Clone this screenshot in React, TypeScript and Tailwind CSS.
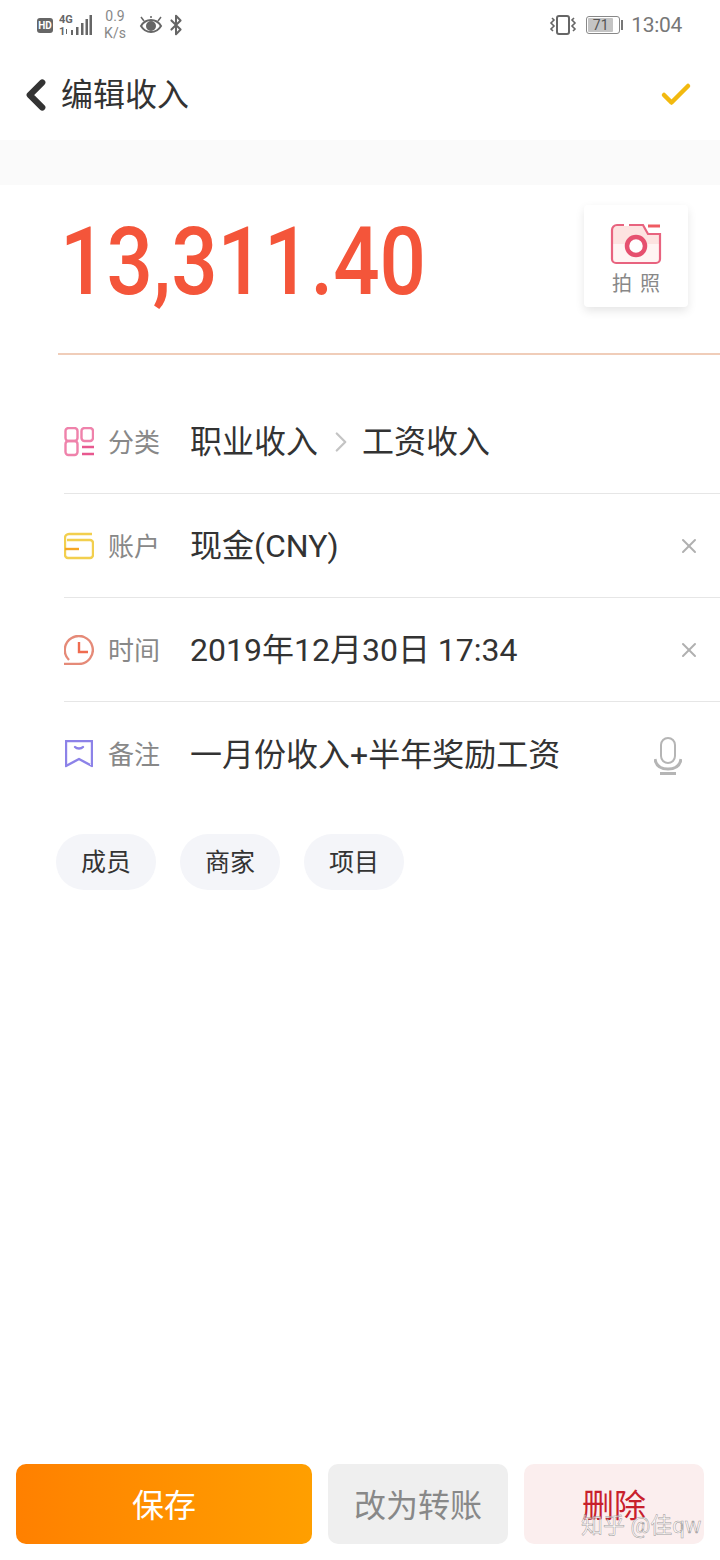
import React from 'react';
import { ChevronLeft, ChevronRight, X, Check, Bluetooth } from 'lucide-react';

const CJK = "font-['Roboto','Noto_Sans_CJK_SC',sans-serif]";

const StatusBar = () => (
  <div className="h-[50px] flex items-center justify-between pl-[37px] pr-[38px] text-[#6b6b6b]">
    <div className="flex items-center">
      <div className="w-[16px] h-[15px] rounded-[3px] bg-[#666] text-white text-[10px] font-bold leading-[15px] text-center">HD</div>
      <div className="ml-[6px] w-[35px] h-[24px]">
        <svg width="35" height="24" viewBox="0 0 35 24">
          <text x="0" y="10" fontSize="11" fontWeight="700" fill="#666" fontFamily="Roboto">4G</text>
          <text x="0" y="22" fontSize="11" fontWeight="700" fill="#666" fontFamily="Roboto">1</text>
          <path d="M7 16h1v5H7zM12 17h2V22h-2zM17 14h2.5V22H17zM22 10h2.5V22H22zM26.500 6h2.500V22h-2.500zM30.500 2h2.500V22h-2.500z" fill="#666" />
        </svg>
      </div>
      <div className="ml-[9px] w-[24px] text-[14px] leading-[17px] font-['Roboto',sans-serif] text-[#888] text-center">
        <div>0.9</div>
        <div>K/s</div>
      </div>
      <svg className="ml-[12px]" width="24" height="20" viewBox="0 0 24 20" fill="none" stroke="#666" strokeWidth="2">
        <path d="M2 11c3-5 6-6 10-6s7 1 10 6c-3 5-6 6-10 6s-7-1-10-6z" />
        <circle cx="12" cy="11" r="4" fill="#666" />
        <path d="M2 2l3 4M22 2l-3 4M12 1v2" strokeWidth="1.5" />
      </svg>
      <Bluetooth className="ml-[2px] text-[#666]" size={22} strokeWidth={2.2} />
    </div>
    <div className="flex items-center">
      <svg width="28" height="22" viewBox="0 0 28 22" fill="none" stroke="#666" strokeWidth="2">
        <rect x="8" y="2" width="12" height="18" rx="2" />
        <path d="M3 4l2 2-3 3 3 3-3 3 2 2M25 4l-2 2 3 3-3 3 3 3-2 2" strokeWidth="1.6" />
      </svg>
      <div className="ml-[9px] w-[34px] h-[18px] rounded-[3px] border border-[#888] p-[1px]">
        <div className="w-[25px] h-[14px] bg-[#c4c4c4] rounded-[1px] text-[14px] leading-[14px] text-[#555] text-center font-['Roboto',sans-serif]">71</div>
      </div>
      <div className="ml-[1px] w-[2px] h-[10px] bg-[#777]" />
      <span className="ml-[8px] text-[21px] tracking-[-0.3px] leading-none text-[#777] font-['Roboto',sans-serif]">13:04</span>
    </div>
  </div>
);

const CategoryIcon = () => (
  <svg width="30" height="30" viewBox="0 0 30 30" fill="none" stroke="#ef82ab" strokeWidth="2.4">
    <rect x="1.500" y="1" width="12" height="13" rx="3" />
    <rect x="17.500" y="1" width="11.500" height="13" rx="3" />
    <rect x="1.500" y="14" width="12" height="14" rx="3" />
    <path d="M18 20h12M18 27h12" stroke="#e8588f" />
  </svg>
);

const AccountIcon = () => (
  <svg width="30" height="28" viewBox="0 0 30 28" fill="none" stroke="#f2cf4e" strokeWidth="2.4">
    <path d="M28 2H5a4 4 0 0 0-4 4v17a3 3 0 0 0 3 3h22a3 3 0 0 0 3-3V11a3 3 0 0 0-3-3H3" />
    <path d="M1 17h14" stroke="#f5a623" />
  </svg>
);

const TimeIcon = () => (
  <svg width="30" height="30" viewBox="0 0 30 30" fill="none" stroke="#e58a78" strokeWidth="2.4">
    <path d="M0 29h15a14 14 0 1 0-10-4" />
    <path d="M15 7v10h9" stroke="#ef6c50" />
  </svg>
);

const NoteIcon = () => (
  <svg width="28" height="28" viewBox="0 0 28 28" fill="none" stroke="#8c82e8" strokeWidth="2.4">
    <path d="M1 1h26v25l-13-7-13 7z" strokeLinejoin="round" />
    <path d="M10 7c2 2 6 2 8 0" strokeLinecap="round" />
  </svg>
);

const MicIcon = () => (
  <svg width="28" height="38" viewBox="0 0 28 38" fill="none" stroke="#b5b5b5" strokeWidth="2">
    <rect x="7" y="1" width="14" height="25" rx="7" />
    <path d="M1 22c1 7 6 10 13 10s12-3 13-10" strokeWidth="3" />
    <path d="M6 36.500h16" strokeWidth="3" />
  </svg>
);

const CameraIcon = () => (
  <svg width="52" height="42" viewBox="0 0 52 42" fill="none">
    <path d="M2 21V8a5 5 0 0 1 5-5h26l5 8h12v10z" fill="#fde3e1" />
    <path d="M2 21v15a4 4 0 0 0 4 4h40a4 4 0 0 0 4-4V21z" fill="#fff4f3" />
    <path d="M14 2H7a5 5 0 0 0-5 5v29a4 4 0 0 0 4 4h40a4 4 0 0 0 4-4V11H38l-5-9H19" stroke="#e8637f" strokeWidth="2.2" />
    <path d="M38 3h12" stroke="#ef5b62" strokeWidth="3" />
    <circle cx="26" cy="23" r="9" fill="#fff" stroke="#e6506f" strokeWidth="4.500" />
  </svg>
);

const Row = ({
  icon,
  label,
  trailing,
  divider,
  children,
}: {
  icon: React.ReactNode;
  label: string;
  trailing?: React.ReactNode;
  divider?: boolean;
  children: React.ReactNode;
}) => (
  <div className={`ml-[64px] h-[104px] flex items-center ${divider ? 'border-b border-[#e6e6e6]' : ''}`}>
    <div className="w-[30px] flex justify-center">{icon}</div>
    <span className="ml-[14px] pt-[3px] text-[26px] text-[#888]">{label}</span>
    <div className="ml-[30px] pt-[1px] flex-1 flex items-center text-[32px] text-[#333]">{children}</div>
    {trailing}
  </div>
);

const Clear = () => <X className="mr-[19px] text-[#b0b0b0]" size={24} strokeWidth={2} />;

const Tag = ({ children }: { children: React.ReactNode }) => (
  <div className="w-[100px] h-[56px] pt-[2px] rounded-full bg-[#f4f5f9] flex items-center justify-center text-[25px] text-[#333]">
    {children}
  </div>
);

export default function App() {
  return (
    <div className={`relative w-[720px] h-[1560px] bg-white flex flex-col ${CJK}`}>
      <StatusBar />

      <div className="h-[90px] flex items-center justify-between pl-[11px] pr-[26px]">
        <div className="flex items-center">
          <ChevronLeft className="text-[#333]" size={50} strokeWidth={3} />
          <span className="text-[32px] text-[#333]">编辑收入</span>
        </div>
        <Check className="text-[#f2b90f]" size={36} strokeWidth={3} />
      </div>

      <div className="h-[45px] bg-[#fafafa]" />

      <div className="ml-[58px] h-[170px] border-b-2 border-[#f0cdb9] flex items-start justify-between">
        <div className="mt-[14px] ml-[2px] origin-left scale-x-[0.86] text-[95px] leading-[126px] font-medium text-[#f4553a] font-['Roboto',sans-serif] whitespace-nowrap">
          13,311.40
        </div>
        <div className="mt-[20px] mr-[32px] w-[104px] h-[102px] rounded-[4px] bg-white shadow-[0_4px_10px_rgba(0,0,0,0.1)] flex flex-col items-center pt-[18px]">
          <CameraIcon />
          <span className="mt-[6px] text-[20px] leading-[26px] tracking-[8px] pl-[8px] text-[#888]">拍照</span>
        </div>
      </div>

      <div className="mt-[35px]">
        <Row icon={<CategoryIcon />} label="分类" divider>
          <span>职业收入</span>
          <ChevronRight className="ml-[6px] mr-[4px] text-[#c4c4c4]" size={34} strokeWidth={1.6} />
          <span>工资收入</span>
        </Row>
        <Row icon={<AccountIcon />} label="账户" divider trailing={<Clear />}>
          现金(CNY)
        </Row>
        <Row icon={<TimeIcon />} label="时间" divider trailing={<Clear />}>
          2019年12月30日 17:34
        </Row>
        <Row icon={<NoteIcon />} label="备注" trailing={<div className="mr-[38px] mt-[4px]"><MicIcon /></div>}>
          一月份收入+半年奖励工资
        </Row>
      </div>

      <div className="mt-[28px] ml-[56px] flex gap-[24px]">
        <Tag>成员</Tag>
        <Tag>商家</Tag>
        <Tag>项目</Tag>
      </div>

      <div className="mt-auto mb-[16px] px-[16px] flex gap-[16px] text-[32px]">
        <button className="w-[296px] h-[80px] pt-[3px] rounded-[10px] bg-gradient-to-r from-[#ff8000] to-[#ff9f00] text-white">保存</button>
        <button className="w-[180px] h-[80px] pt-[3px] rounded-[10px] bg-[#efefef] text-[#888]">改为转账</button>
        <button className="w-[180px] h-[80px] pt-[3px] rounded-[10px] bg-[#fbeeee] text-[#c8202c]">删除</button>
      </div>

      <div className="absolute left-[581px] top-[1512px] text-[22px] leading-[28px] text-white/60 [-webkit-text-stroke:0.5px_rgba(110,110,110,0.7)] whitespace-nowrap">
        知乎 @佳qw
      </div>
    </div>
  );
}
